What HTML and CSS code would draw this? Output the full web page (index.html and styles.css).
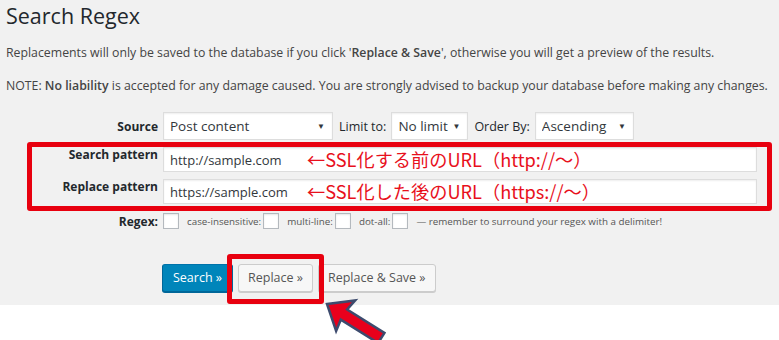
FILE: index.html
```html
<!DOCTYPE html>
<html lang="ja">
<head>
  <meta charset="UTF-8" />
  <title>Search Regex</title>
  <link rel="stylesheet" href="styles.css">
</head>
<body>

  <div class="wrap">
    <h1>Search Regex</h1>
    <p>Replacements will only be saved to the database if you click '<strong>Replace &amp; Save</strong>', otherwise you will get a preview of the results.</p>
    <p>NOTE: <strong>No liability</strong> is accepted for any damage caused. You are strongly advised to backup your database before making any changes.</p>

    <form class="regex-form" onsubmit="return false">
      <div class="row row-source">
        <label class="field-label">Source</label>
        <span class="select-box source-select">
          <select><option>Post content</option></select>
        </span>
        <label class="inline-label">Limit to:</label>
        <span class="select-box limit-select">
          <select><option>No limit</option></select>
        </span>
        <label class="inline-label">Order By:</label>
        <span class="select-box order-select">
          <select><option>Ascending</option></select>
        </span>
      </div>

      <div class="pattern-rows">
        <div class="row row-pattern">
          <label class="field-label top">Search pattern</label>
          <span class="input-box">
            <input type="text" value="http://sample.com">
            <span class="note">←SSL化する前のURL（http://〜）</span>
          </span>
        </div>
        <div class="row row-pattern">
          <label class="field-label top">Replace pattern</label>
          <span class="input-box">
            <input type="text" value="https://sample.com">
            <span class="note">←SSL化した後のURL（https://〜）</span>
          </span>
        </div>
        <span class="mark mark-patterns"></span>
      </div>

      <div class="row row-regex">
        <label class="field-label">Regex:</label>
        <input type="checkbox" class="check">
        <span class="small">case-insensitive:</span>
        <input type="checkbox" class="check">
        <span class="small">multi-line:</span>
        <input type="checkbox" class="check">
        <span class="small">dot-all:</span>
        <input type="checkbox" class="check">
        <span class="small">— remember to surround your regex with a delimiter!</span>
      </div>

      <div class="row row-buttons">
        <button class="button button-primary">Search »</button>
        <span class="marked">
          <button class="button">Replace »</button>
          <span class="mark mark-button"></span>
          <svg class="pointer" width="80" height="60" viewBox="0 0 80 60">
            <g transform="translate(13 10) rotate(32)">
              <polygon points="0,0 22,-18 20,-6 64,-6 64,6 20,6 22,18" fill="#e8001c" stroke="#3d4b6e" stroke-width="2.5"/>
            </g>
          </svg>
        </span>
        <button class="button">Replace &amp; Save »</button>
      </div>
    </form>
  </div>
  <div class="below"></div>

</body>
</html>
```

FILE: styles.css
```css
* {
  box-sizing: border-box;
}

html {
  background: #fff;
}

body {
  margin: 0;
  background: #fff;
  font-family: "Open Sans", "Noto Sans", sans-serif;
  font-size: 13px;
  color: #444;
}

.wrap {
  background: #f1f1f1;
  height: 305px;
  padding: 1px 0 0 6px;
}

.below {
  height: 35px;
  background: #fff;
}

h1 {
  margin: 0;
  font-size: 21.5px;
  font-weight: 400;
  line-height: 29px;
  color: #23282d;
}

p {
  margin: 13px 0;
  line-height: 20px;
  font-size: 12.3px;
  white-space: nowrap;
}

strong {
  font-weight: 600;
}

.regex-form {
  margin: 0;
}

.row {
  display: flex;
  align-items: center;
}

.row-source {
  padding-top: 3px;
}

.field-label {
  width: 152px;
  margin-right: 5px;
  text-align: right;
  font-size: 12px;
  font-weight: 700;
  color: #23282d;
}

.field-label.top {
  align-self: flex-start;
  line-height: 15px;
}

.inline-label {
  margin: 0 5px 0 6px;
  font-size: 12.5px;
  color: #23282d;
}

.select-box {
  position: relative;
  display: inline-block;
  height: 28px;
}

.select-box::after {
  content: "▼";
  position: absolute;
  right: 8px;
  top: 8px;
  font-size: 8px;
  color: #32373c;
  pointer-events: none;
}

.select-box select {
  appearance: none;
  -webkit-appearance: none;
  width: 100%;
  height: 28px;
  margin: 0;
  padding: 0 6px;
  border: 1px solid #ddd;
  border-radius: 0;
  background: #fff;
  box-shadow: inset 0 1px 2px rgba(0, 0, 0, .07);
  font-family: inherit;
  font-size: 13.5px;
  color: #32373c;
}

.source-select { width: 170px; }
.limit-select { width: 77px; }
.order-select { width: 99px; }

.pattern-rows {
  position: relative;
  margin-top: 7px;
}

.row-pattern + .row-pattern {
  margin-top: 7px;
}

.input-box {
  position: relative;
  display: inline-block;
  width: 594px;
  height: 25px;
}

.input-box input {
  width: 100%;
  height: 25px;
  margin: 0;
  padding: 0 6px;
  border: 1px solid #ddd;
  background: #fff;
  box-shadow: inset 0 1px 2px rgba(0, 0, 0, .07);
  font-family: inherit;
  font-size: 13px;
  color: #32373c;
}

.note {
  position: absolute;
  left: 144px;
  top: 0;
  line-height: 25px;
  font-family: "Noto Sans CJK JP", "Noto Sans", sans-serif;
  font-size: 18.2px;
  color: #e8101c;
  white-space: nowrap;
  pointer-events: none;
}

.mark {
  position: absolute;
  border: 5px solid #e8000f;
  border-radius: 3px;
  pointer-events: none;
}

.mark-patterns {
  left: 21px;
  right: 7px;
  top: -5px;
  bottom: -7px;
}

.row-regex {
  margin-top: 9px;
  height: 16px;
}

.check {
  appearance: none;
  -webkit-appearance: none;
  width: 16px;
  height: 16px;
  margin: 0;
  border: 1px solid #b4b9be;
  background: #fff;
  box-shadow: inset 0 1px 2px rgba(0, 0, 0, .1);
}

.small {
  font-size: 9.8px;
  color: #555;
  margin: 0 2px 0 8px;
}

.row-buttons {
  margin-top: 35px;
  padding-left: 156px;
  gap: 5px;
}

.marked {
  position: relative;
  display: flex;
}

.mark-button {
  left: -11px;
  right: -11px;
  top: -10px;
  bottom: -12px;
}

.pointer {
  position: absolute;
  left: 76px;
  top: 30px;
  overflow: visible;
  z-index: 2;
}

.button {
  height: 28px;
  margin: 0;
  padding: 0 9px;
  border: 1px solid #ccc;
  border-radius: 3px;
  background: #f7f7f7;
  box-shadow: 0 1px 0 #ccc;
  font-family: inherit;
  font-size: 12.5px;
  line-height: 26px;
  color: #555;
}

.button-primary {
  padding: 0 10px;
  background: #0085ba;
  border-color: #0073aa #006799 #006799;
  box-shadow: 0 1px 0 #006799;
  color: #fff;
}
```
